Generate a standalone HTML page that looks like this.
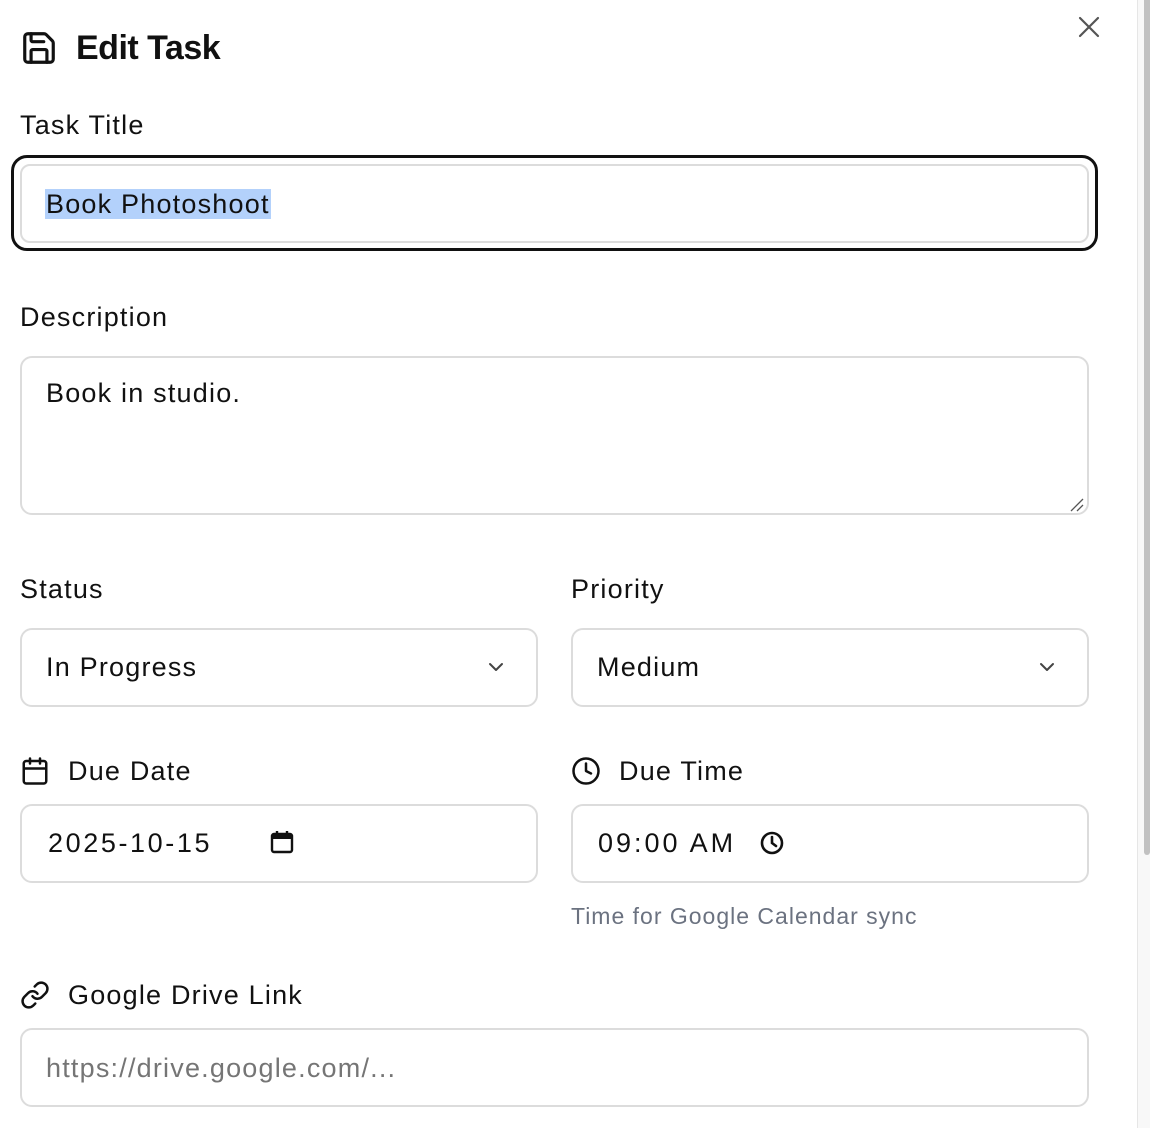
<!DOCTYPE html>
<html><head><meta charset="utf-8"><style>
*{box-sizing:border-box;margin:0;padding:0}
body{width:1150px;height:1128px;background:#fff;font-family:"Liberation Sans",Arial,sans-serif;color:#111;position:relative;overflow:hidden}
.a{position:absolute}
.lbl{font-size:27px;letter-spacing:1.2px;color:#111;white-space:nowrap;line-height:30px}
.box{position:absolute;border:2px solid #dcdcdc;border-radius:12px;background:#fff}
.txt{position:absolute;font-size:27px;letter-spacing:1.2px;line-height:30px;white-space:nowrap}
svg{position:absolute}
</style></head><body>
<div class="a" style="left:1137px;top:0;width:13px;height:1128px;background:#f8f8f8;border-left:1px solid #e6e6e6"></div>
<div class="a" style="left:1144px;top:0;width:6px;height:855px;background:#c1c1c1;border-radius:0 0 4px 4px"></div>

<svg style="left:20px;top:29px" width="38" height="38" viewBox="0 0 24 24" fill="none" stroke="#111" stroke-width="2" stroke-linecap="round" stroke-linejoin="round"><path d="M15.2 3a2 2 0 0 1 1.4.6l3.8 3.8a2 2 0 0 1 .6 1.4V19a2 2 0 0 1-2 2H5a2 2 0 0 1-2-2V5a2 2 0 0 1 2-2z"/><path d="M17 21v-7a1 1 0 0 0-1-1H8a1 1 0 0 0-1 1v7"/><path d="M7 3v4a1 1 0 0 0 1 1h7"/></svg>
<div class="a" style="left:76px;top:28px;font-size:34px;font-weight:bold;letter-spacing:-0.5px;line-height:40px">Edit Task</div>
<svg style="left:1077px;top:15px" width="24" height="24" viewBox="0 0 24 24" stroke="#555" stroke-width="2.2" stroke-linecap="round"><path d="M3 3L21 21M21 3L3 21"/></svg>

<div class="a lbl" style="left:20px;top:110px">Task Title</div>
<div class="a" style="left:11px;top:155px;width:1087px;height:96px;border:3px solid #111;border-radius:16px"></div>
<div class="box" style="left:20px;top:164px;width:1069px;height:79px;border-radius:10px"></div>
<div class="txt" style="left:45px;top:189px;background:#b3d1fb;padding:0 1px">Book Photoshoot</div>

<div class="a lbl" style="left:20px;top:302px">Description</div>
<div class="box" style="left:20px;top:356px;width:1069px;height:159px"></div>
<div class="txt" style="left:46px;top:378px">Book in studio.</div>
<svg style="left:1068px;top:496px" width="16" height="16" viewBox="0 0 16 16" stroke="#555" stroke-width="1.3"><path d="M3 15L15 3M9 15L15 9"/></svg>

<div class="a lbl" style="left:20px;top:574px">Status</div>
<div class="a lbl" style="left:571px;top:574px">Priority</div>
<div class="box" style="left:20px;top:628px;width:518px;height:79px"></div>
<div class="txt" style="left:46px;top:652px">In Progress</div>
<svg style="left:484px;top:655px" width="24" height="24" viewBox="0 0 24 24" fill="none" stroke="#444" stroke-width="2" stroke-linecap="round" stroke-linejoin="round"><path d="M6 9l6 6 6-6"/></svg>
<div class="box" style="left:571px;top:628px;width:518px;height:79px"></div>
<div class="txt" style="left:597px;top:652px">Medium</div>
<svg style="left:1035px;top:655px" width="24" height="24" viewBox="0 0 24 24" fill="none" stroke="#444" stroke-width="2" stroke-linecap="round" stroke-linejoin="round"><path d="M6 9l6 6 6-6"/></svg>

<svg style="left:20px;top:756px" width="30" height="30" viewBox="0 0 24 24" fill="none" stroke="#111" stroke-width="2" stroke-linecap="round" stroke-linejoin="round"><path d="M8 2v4M16 2v4"/><rect x="3" y="4" width="18" height="18" rx="2"/><path d="M3 10h18"/></svg>
<div class="a lbl" style="left:68px;top:756px">Due Date</div>
<svg style="left:571px;top:756px" width="30" height="30" viewBox="0 0 24 24" fill="none" stroke="#111" stroke-width="2" stroke-linecap="round" stroke-linejoin="round"><circle cx="12" cy="12" r="10"/><path d="M12 6v6l4 2"/></svg>
<div class="a lbl" style="left:619px;top:756px">Due Time</div>

<div class="box" style="left:20px;top:804px;width:518px;height:79px"></div>
<div class="txt" style="left:48px;top:828px;letter-spacing:2.6px">2025-10-15</div>
<svg style="left:270px;top:830px" width="24" height="24" viewBox="0 0 24 24"><rect x="2" y="4" width="20" height="18" rx="2" fill="none" stroke="#111" stroke-width="2.4"/><rect x="2" y="4" width="20" height="5" fill="#111"/><path d="M7 1v5M17 1v5" stroke="#111" stroke-width="2.4"/></svg>
<div class="box" style="left:571px;top:804px;width:518px;height:79px"></div>
<div class="txt" style="left:598px;top:828px;letter-spacing:3px">09:00 AM</div>
<svg style="left:760px;top:831px" width="24" height="24" viewBox="0 0 24 24" fill="none" stroke="#111" stroke-width="2.6" stroke-linecap="round"><circle cx="12" cy="12" r="10"/><path d="M12 6v6l4 3"/></svg>
<div class="a" style="left:571px;top:902px;font-size:23px;letter-spacing:1px;color:#6b7280;line-height:28px;white-space:nowrap">Time for Google Calendar sync</div>

<svg style="left:20px;top:980px" width="30" height="30" viewBox="0 0 24 24" fill="none" stroke="#111" stroke-width="2" stroke-linecap="round" stroke-linejoin="round"><path d="M10 13a5 5 0 0 0 7.54.54l3-3a5 5 0 0 0-7.07-7.07l-1.72 1.71"/><path d="M14 11a5 5 0 0 0-7.54-.54l-3 3a5 5 0 0 0 7.07 7.07l1.71-1.71"/></svg>
<div class="a lbl" style="left:68px;top:980px">Google Drive Link</div>
<div class="box" style="left:20px;top:1028px;width:1069px;height:79px"></div>
<div class="txt" style="left:46px;top:1053px;color:#757575">https://drive.google.com/...</div>
</body></html>
